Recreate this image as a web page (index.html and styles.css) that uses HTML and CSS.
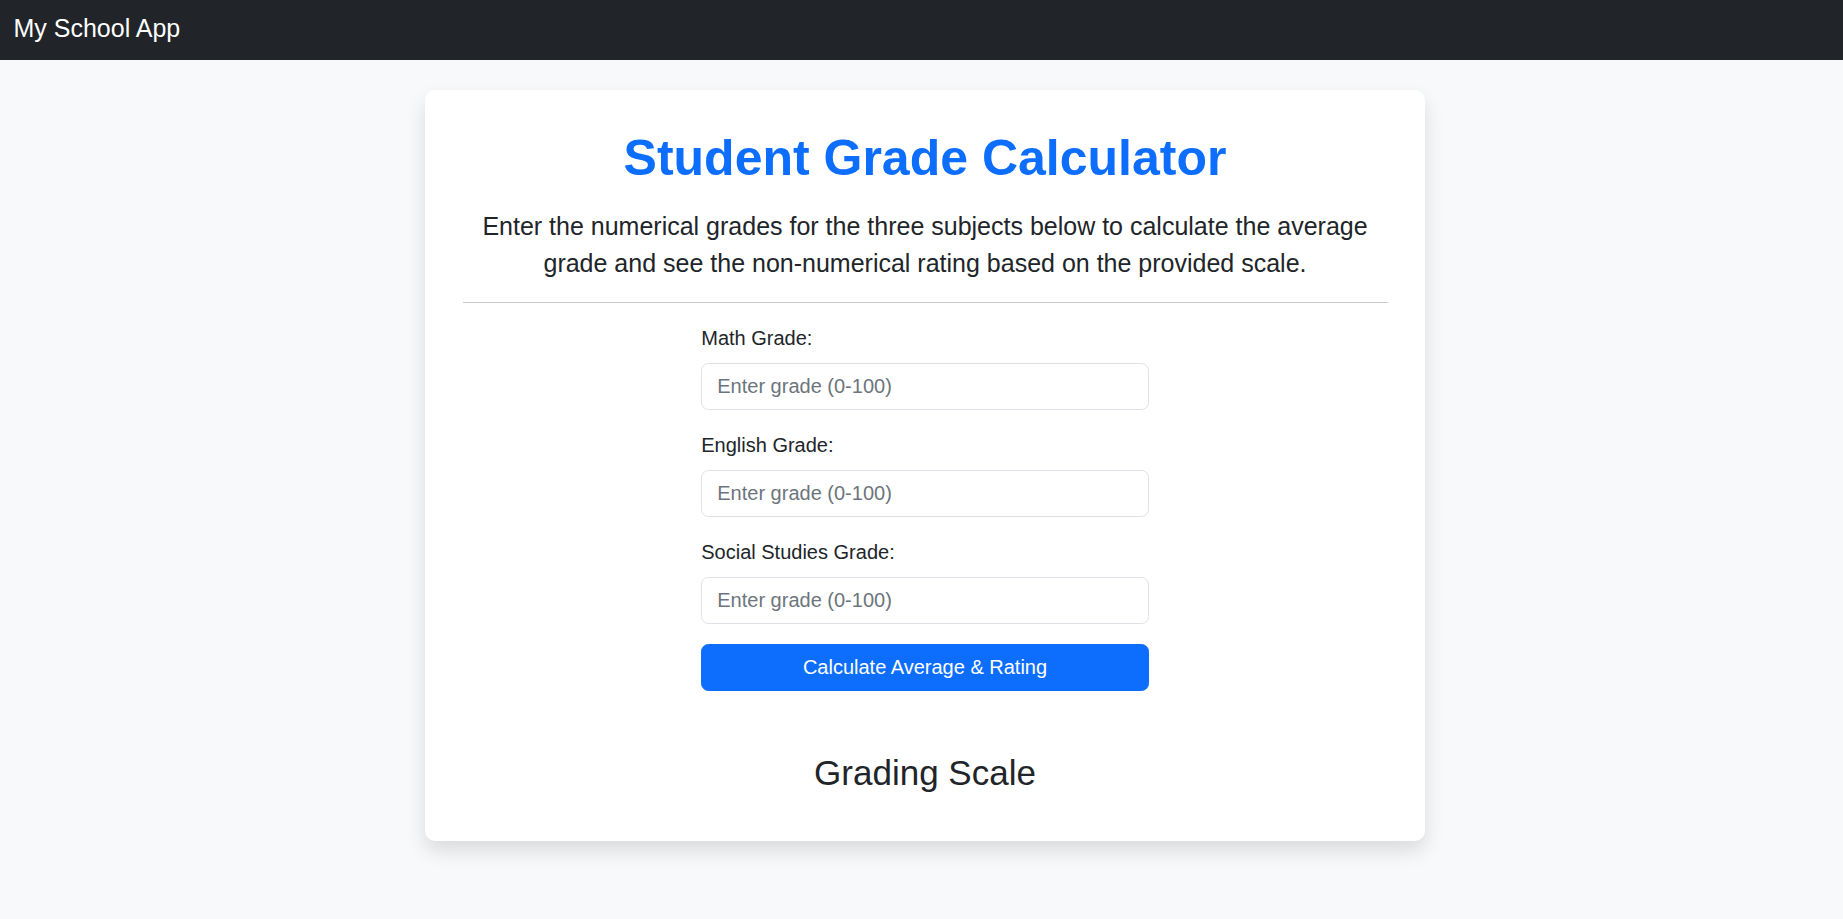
FILE: index.html
```html
<!DOCTYPE html>
<html lang="en">
<head>
<meta charset="utf-8">
<title>Student Grade Calculator</title>
<link rel="stylesheet" href="styles.css">
</head>
<body>
<nav class="navbar">
  <span class="brand">My School App</span>
</nav>
<main class="main">
  <section class="card">
    <h1 class="title">Student Grade Calculator</h1>
    <p class="lead">Enter the numerical grades for the three subjects below to calculate the average grade and see the non-numerical rating based on the provided scale.</p>
    <hr class="divider">
    <form class="grade-form">
      <div class="field">
        <label class="field-label" for="math">Math Grade:</label>
        <input class="field-input" id="math" type="text" placeholder="Enter grade (0-100)">
      </div>
      <div class="field">
        <label class="field-label" for="english">English Grade:</label>
        <input class="field-input" id="english" type="text" placeholder="Enter grade (0-100)">
      </div>
      <div class="field">
        <label class="field-label" for="social">Social Studies Grade:</label>
        <input class="field-input" id="social" type="text" placeholder="Enter grade (0-100)">
      </div>
      <button class="calc-btn" type="button">Calculate Average &amp; Rating</button>
    </form>
    <h3 class="scale-title">Grading Scale</h3>
  </section>
</main>
</body>
</html>
```

FILE: styles.css
```css
* {
  box-sizing: border-box;
}

html, body {
  margin: 0;
  padding: 0;
}

body {
  background: #f8f9fa;
  color: #212529;
  font-family: "Liberation Sans", Arial, sans-serif;
  font-size: 20px;
  line-height: 1.5;
  min-height: 100vh;
}

.navbar {
  background: #212529;
  height: 60px;
  padding: 10px 13.5px 12.5px;
  display: flex;
  align-items: flex-start;
}

.brand {
  color: #ffffff;
  font-size: 25px;
  line-height: 37.5px;
}

.main {
  padding: 30px 0 30px 7px;
}

.card {
  width: 1000px;
  margin: 0 auto;
  background: #ffffff;
  border-radius: 10px;
  padding: 37.5px;
  box-shadow: 0 10px 20px rgba(0, 0, 0, 0.12);
}

.title {
  margin: 0 0 20px;
  color: #0d6efd;
  font-size: 50px;
  font-weight: 700;
  line-height: 1.2;
  text-align: center;
}

.lead {
  margin: 0;
  font-size: 25px;
  line-height: 1.5;
  text-align: center;
}

.divider {
  margin: 19px 0 20px;
  border: 0;
  border-top: 1px solid #c8c9ca;
  height: 0;
}

.grade-form {
  width: 447.5px;
  margin: 0 auto;
  display: flex;
  flex-direction: column;
}

.field {
  display: flex;
  flex-direction: column;
  margin-bottom: 20px;
}

.field-label {
  font-size: 20px;
  line-height: 30px;
  margin-bottom: 10px;
}

.field-input {
  font-family: inherit;
  font-size: 20px;
  line-height: 30px;
  height: 47px;
  padding: 7.5px 15px;
  border: 1px solid #dee2e6;
  border-radius: 7.5px;
  color: #212529;
  background: #ffffff;
  outline: none;
}

.field-input::placeholder {
  color: #6c757d;
  opacity: 1;
}

.calc-btn {
  font-family: inherit;
  font-size: 20px;
  line-height: 30px;
  height: 47px;
  padding: 7.5px 15px;
  border: 1px solid #0d6efd;
  border-radius: 7.5px;
  background: #0d6efd;
  color: #ffffff;
  cursor: pointer;
}

.scale-title {
  margin: 61px 0 10px;
  font-size: 35px;
  font-weight: 500;
  line-height: 1.2;
  text-align: center;
}
```
